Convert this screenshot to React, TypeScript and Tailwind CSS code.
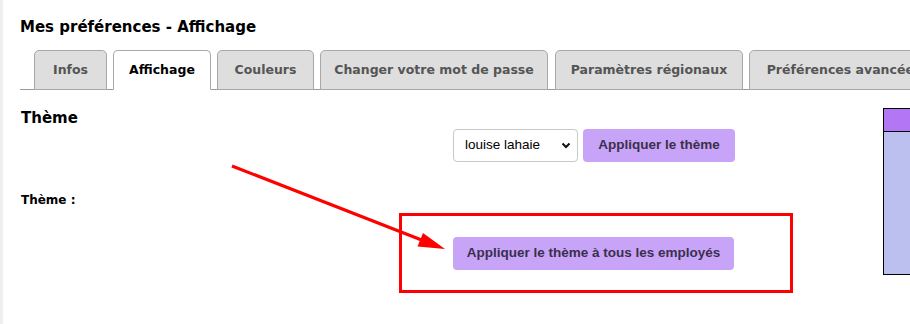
import { useState } from 'react';

const TABS: [string, string][] = [
  ['Infos', 'w-[73px]'],
  ['Affichage', 'w-[98px]'],
  ['Couleurs', 'w-[97px]'],
  ['Changer votre mot de passe', 'w-[228px]'],
  ['Paramètres régionaux', 'w-[188px]'],
  ['Préférences avancées', 'w-[190px]'],
];

const BTN =
  'h-[33px] whitespace-nowrap rounded-[4px] bg-[#c8a4f8] text-[13.5px] font-bold text-[#3b2f4c] [font-family:"Liberation_Sans",Arial,sans-serif]';

export default function App() {
  const [active, setActive] = useState('Affichage');
  const [theme, setTheme] = useState('louise lahaie');

  return (
    <div className='relative h-[324px] w-[910px] overflow-hidden border-l-[3px] border-[#efefef] bg-white [font-family:"DejaVu_Sans",Verdana,sans-serif]'>
      <h1 className="pl-[17px] pt-[17px] text-[15px] font-bold leading-[20px] text-black">
        Mes préférences - Affichage
      </h1>

      <div className="ml-[17px] mt-[13px] flex border-b border-[#9a9a9a] pl-[14px]">
        {TABS.map(([t, w], i) => {
          const on = t === active;
          return (
            <button
              key={t}
              onClick={() => setActive(t)}
              className={
                'mb-[-1px] h-[40px] shrink-0 whitespace-nowrap rounded-t-[5px] border border-[#a8a8a8] text-[12.5px] font-bold ' +
                w +
                (i === 4 ? ' ml-[7px]' : i > 0 ? ' ml-[6px]' : '') +
                (on ? ' border-b-white bg-white text-black' : ' bg-[#dedede] text-[#555]')
              }
            >
              {t}
            </button>
          );
        })}
      </div>

      <div className="flex">
        <div className="w-[450px] pl-[18px] pt-[19px]">
          <h2 className="text-[15px] font-bold leading-[18px] text-black">Thème</h2>
          <p className="mt-[64px] text-[12px] font-bold text-black">Thème :</p>
        </div>

        <div className="pt-[39px]">
          <div className="flex gap-[5px]">
            <div className="relative">
              <select
                value={theme}
                onChange={(e) => setTheme(e.target.value)}
                className='h-[33px] w-[125px] appearance-none rounded-[4px] border border-[#c9c9c9] bg-white pl-[11px] text-[13.5px] text-black [font-family:"Liberation_Sans",Arial,sans-serif]'
              >
                <option>louise lahaie</option>
                <option>défaut</option>
              </select>
              <svg className="pointer-events-none absolute right-[7px] top-[13px]" width="10" height="7" viewBox="0 0 10 7">
                <path d="M1.5 1.5 L5 5 L8.5 1.5" fill="none" stroke="#111" strokeWidth="2" />
              </svg>
            </div>
            <button className={BTN + ' w-[152px]'}>Appliquer le thème</button>
          </div>

          <button className={BTN + ' mt-[75px] w-[281px]'}>Appliquer le thème à tous les employés</button>
        </div>

        <div className="ml-auto mt-[18px] h-[167px] w-[27px] border border-r-0 border-black bg-[#bcc0ee]">
          <div className="h-[23px] border-b border-black bg-[#b377f6]" />
        </div>
      </div>

      {/* annotation overlay */}
      <div className="pointer-events-none absolute left-[396px] top-[213px] h-[80px] w-[394px] border-[3px] border-[#ff0000]" />
      <svg className="pointer-events-none absolute left-[-3px] top-0" width="910" height="324">
        <line x1="232" y1="166" x2="428" y2="242.5" stroke="#ff0000" strokeWidth="3.2" />
        <polygon points="445,249 417.5,246.5 423,233" fill="#ff0000" />
      </svg>
    </div>
  );
}
